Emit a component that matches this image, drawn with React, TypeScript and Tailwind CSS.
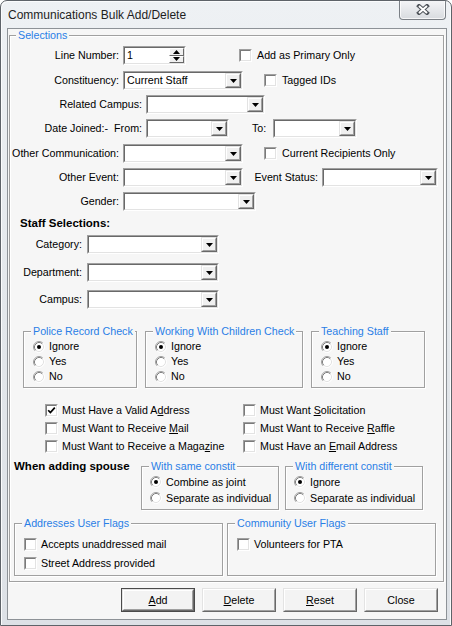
import React from "react";

function Label({ w, children }: { w: string; children: React.ReactNode }) {
  return <div className={`${w} shrink-0 text-right pr-[4px] whitespace-nowrap`}>{children}</div>;
}

function DropBtn() {
  return (
    <div className="w-[16px] h-full shrink-0 flex border border-t-[#e3e3e3] border-l-[#e3e3e3] border-r-[#696969] border-b-[#696969]">
      <div className="flex-1 flex items-center justify-center bg-[#f0f0f0] border border-t-white border-l-white border-r-[#a0a0a0] border-b-[#a0a0a0]">
        <svg width="7" height="4" viewBox="0 0 7 4" className="mt-[1px]">
          <path d="M0 0h7L3.5 4z" fill="#000" />
        </svg>
      </div>
    </div>
  );
}

function Combo({ w, value }: { w: string; value?: string }) {
  return (
    <div className={`${w} h-[19px] shrink-0 flex border border-t-[#a0a0a0] border-l-[#a0a0a0] border-r-white border-b-white`}>
      <div className="flex-1 min-w-0 flex border border-t-[#696969] border-l-[#696969] border-r-[#e3e3e3] border-b-[#e3e3e3] bg-white">
        <div className="flex-1 min-w-0 pl-[2px] leading-[15px] whitespace-nowrap overflow-hidden">{value}</div>
        <DropBtn />
      </div>
    </div>
  );
}

function SpinBtn({ up }: { up?: boolean }) {
  return (
    <div className="flex-1 flex items-center justify-center bg-[#f0f0f0] border border-t-white border-l-white border-r-[#696969] border-b-[#696969]">
      <svg width="7" height="4" viewBox="0 0 7 4">
        {up ? <path d="M0 4h7L3.5 0z" fill="#000" /> : <path d="M0 0h7L3.5 4z" fill="#000" />}
      </svg>
    </div>
  );
}

function Spinner() {
  return (
    <div className="w-[63px] h-[19px] shrink-0 flex border border-t-[#a0a0a0] border-l-[#a0a0a0] border-r-white border-b-white">
      <div className="flex-1 flex border border-t-[#696969] border-l-[#696969] border-r-[#e3e3e3] border-b-[#e3e3e3] bg-white">
        <div className="flex-1 pl-[2px] leading-[15px]">1</div>
        <div className="w-[15px] flex flex-col">
          <SpinBtn up />
          <SpinBtn />
        </div>
      </div>
    </div>
  );
}

function Check({ on }: { on?: boolean }) {
  return (
    <div className="w-[13px] h-[13px] shrink-0 border border-t-[#a0a0a0] border-l-[#a0a0a0] border-r-white border-b-white">
      <div className="w-full h-full bg-white border border-t-[#7a7a7a] border-l-[#7a7a7a] border-r-[#e3e3e3] border-b-[#e3e3e3] flex items-center justify-center">
        {on && (
          <svg width="9" height="9" viewBox="0 0 9 9">
            <path d="M1.2 4.2 L3.4 6.6 L7.8 1.6" stroke="#000" strokeWidth="1.7" fill="none" />
          </svg>
        )}
      </div>
    </div>
  );
}

function Radio({ on }: { on?: boolean }) {
  return (
    <svg width="12" height="12" viewBox="0 0 12 12" className="shrink-0">
      <circle cx="6" cy="6" r="5" fill="#fff" />
      <path d="M2.11 9.89A5.5 5.5 0 0 1 9.89 2.11" stroke="#a0a0a0" fill="none" />
      <path d="M9.89 2.11A5.5 5.5 0 0 1 2.11 9.89" stroke="#ffffff" fill="none" />
      <path d="M2.82 9.18A4.5 4.5 0 0 1 9.18 2.82" stroke="#808080" fill="none" />
      <path d="M9.18 2.82A4.5 4.5 0 0 1 2.82 9.18" stroke="#e3e3e3" fill="none" />
      {on && <circle cx="6" cy="6" r="2" fill="#000" />}
    </svg>
  );
}

function CheckRow({ on, children, gap = "gap-[4px]" }: { on?: boolean; children: React.ReactNode; gap?: string }) {
  return (
    <div className={`flex items-center ${gap} whitespace-nowrap`}>
      <Check on={on} />
      <span>{children}</span>
    </div>
  );
}

function RadioRow({ on, children, h }: { on?: boolean; children: React.ReactNode; h: string }) {
  return (
    <div className={`${h} flex items-center gap-[4px] whitespace-nowrap`}>
      <Radio on={on} />
      <span>{children}</span>
    </div>
  );
}

function Group({
  title,
  className,
  legend = "left-[7px]",
  children,
}: {
  title: string;
  className: string;
  legend?: string;
  children?: React.ReactNode;
}) {
  return (
    <div className={`relative shrink-0 border border-[#a0a0a0] shadow-[inset_1px_1px_0_#fff,1px_1px_0_#fff] ${className}`}>
      <span className={`absolute -top-[7px] ${legend} px-[2px] leading-[13px] bg-[#f6f6f6] text-[#2a7ee6] whitespace-nowrap`}>
        {title}
      </span>
      {children}
    </div>
  );
}

function Btn({ children, def }: { children: React.ReactNode; def?: boolean }) {
  const inner = (
    <div className="w-full h-full border border-t-[#e3e3e3] border-l-[#e3e3e3] border-r-[#696969] border-b-[#696969]">
      <div className="w-full h-full border border-t-white border-l-white border-r-[#a0a0a0] border-b-[#a0a0a0] bg-[#f3f3f3] flex items-center justify-center">
        {children}
      </div>
    </div>
  );
  return def ? (
    <div className="w-[74px] h-[24px] border border-[#4a4a4a]">{inner}</div>
  ) : (
    <div className="w-[74px] h-[24px]">{inner}</div>
  );
}

export default function App() {
  return (
    <div className="w-[452px] h-[626px] flex flex-col border border-[#5e6369] rounded-t-[7px] bg-linear-to-b from-[#eef1f4] via-[#e3e7eb] to-[#dde1e6] shadow-[inset_1px_1px_0_#fbfcfd,inset_-1px_0_0_#fbfcfd] font-['Liberation_Sans',Arial,sans-serif] text-[10.7px] leading-[13px] text-black overflow-hidden">
      {/* Title bar */}
      <div className="h-[27px] shrink-0 flex items-start">
        <span className="pl-[7px] pt-[6px] text-[12px] leading-[16px] text-[#1e1e1e]">Communications Bulk Add/Delete</span>
        <div className="ml-auto -mt-[1px] mr-[5px] w-[47px] h-[20px] rounded-b-[4px] border border-t-0 border-[#7b8086] bg-linear-to-b from-[#f5f6f8] to-[#d8dbdf] shadow-[inset_0_0_0_1px_rgba(255,255,255,0.75)] flex items-center justify-center">
          <svg width="14" height="11" viewBox="0 0 14 11">
            <path d="M3 2 L11 9 M11 2 L3 9" stroke="#50555b" strokeWidth="4" strokeLinecap="square" />
            <path d="M3 2 L11 9 M11 2 L3 9" stroke="#ffffff" strokeWidth="2" strokeLinecap="butt" />
          </svg>
        </div>
      </div>

      {/* Client area */}
      <div className="ml-[6px] w-[440px] h-[592px] shrink-0 border border-[#8d9297] bg-[#f6f6f6] flex flex-col">
        <Group title="Selections" legend="left-[6px]" className="ml-[1px] mt-[6px] w-[435px] h-[547px]">
          <div className="flex flex-col">
            {/* Line Number */}
            <div className="mt-[10px] h-[19px] flex items-center">
              <Label w="w-[113px]">Line Number:</Label>
              <Spinner />
              <div className="ml-[53px]">
                <CheckRow gap="gap-[5px]">Add as Primary Only</CheckRow>
              </div>
            </div>
            {/* Constituency */}
            <div className="mt-[6px] h-[19px] flex items-center">
              <Label w="w-[113px]">Constituency:</Label>
              <Combo w="w-[120px]" value="Current Staff" />
              <div className="ml-[21px]">
                <CheckRow gap="gap-[5px]">Tagged IDs</CheckRow>
              </div>
            </div>
            {/* Related Campus */}
            <div className="mt-[5px] h-[19px] flex items-center">
              <Label w="w-[136px]">Related Campus:</Label>
              <Combo w="w-[119px]" />
            </div>
            {/* Date Joined */}
            <div className="mt-[5px] h-[19px] flex items-center">
              <Label w="w-[136px]">
                Date Joined:-<span className="ml-[6px]">From:</span>
              </Label>
              <Combo w="w-[83px]" />
              <span className="ml-[23px] w-[21px] shrink-0">To:</span>
              <Combo w="w-[84px]" />
            </div>
            {/* Other Communication */}
            <div className="mt-[6px] h-[19px] flex items-center">
              <Label w="w-[113px]">Other Communication:</Label>
              <Combo w="w-[120px]" />
              <div className="ml-[21px]">
                <CheckRow gap="gap-[5px]">Current Recipients Only</CheckRow>
              </div>
            </div>
            {/* Other Event */}
            <div className="mt-[5px] h-[19px] flex items-center">
              <Label w="w-[113px]">Other Event:</Label>
              <Combo w="w-[120px]" />
              <div className="ml-[10px]">
                <Label w="w-[69px]">Event Status:</Label>
              </div>
              <Combo w="w-[116px]" />
            </div>
            {/* Gender */}
            <div className="mt-[5px] h-[19px] flex items-center">
              <Label w="w-[113px]">Gender:</Label>
              <Combo w="w-[133px]" />
            </div>

            {/* Staff Selections */}
            <div className="mt-[5px] ml-[10px] h-[14px] font-bold text-[11.5px] leading-[14px]">Staff Selections:</div>
            <div className="mt-[5px] h-[19px] flex items-center">
              <div className="w-[77px] shrink-0 text-right pr-[5px]">Category:</div>
              <Combo w="w-[132px]" />
            </div>
            <div className="mt-[9px] h-[19px] flex items-center">
              <div className="w-[77px] shrink-0 text-right pr-[5px]">Department:</div>
              <Combo w="w-[132px]" />
            </div>
            <div className="mt-[8px] h-[19px] flex items-center">
              <div className="w-[77px] shrink-0 text-right pr-[5px]">Campus:</div>
              <Combo w="w-[132px]" />
            </div>

            {/* Radio groups */}
            <div className="mt-[22px] ml-[13px] flex gap-[8px]">
              <Group title="Police Record Check" className="w-[114px] h-[57px]">
                <div className="pt-[7px] pl-[9px] flex flex-col">
                  <RadioRow h="h-[15px]" on>Ignore</RadioRow>
                  <RadioRow h="h-[15px]">Yes</RadioRow>
                  <RadioRow h="h-[15px]">No</RadioRow>
                </div>
              </Group>
              <Group title="Working With Children Check" className="w-[158px] h-[57px]">
                <div className="pt-[7px] pl-[9px] flex flex-col">
                  <RadioRow h="h-[15px]" on>Ignore</RadioRow>
                  <RadioRow h="h-[15px]">Yes</RadioRow>
                  <RadioRow h="h-[15px]">No</RadioRow>
                </div>
              </Group>
              <Group title="Teaching Staff" className="w-[114px] h-[57px]">
                <div className="pt-[7px] pl-[9px] flex flex-col">
                  <RadioRow h="h-[15px]" on>Ignore</RadioRow>
                  <RadioRow h="h-[15px]">Yes</RadioRow>
                  <RadioRow h="h-[15px]">No</RadioRow>
                </div>
              </Group>
            </div>

            {/* Checkbox block */}
            <div className="mt-[13px] ml-[35px] grid grid-cols-[198px_auto] auto-rows-[18px] items-center">
              <CheckRow on>
                Must Have a Valid A<span className="underline">d</span>dress
              </CheckRow>
              <CheckRow>
                Must Want <span className="underline">S</span>olicitation
              </CheckRow>
              <CheckRow>
                Must Want to Receive <span className="underline">M</span>ail
              </CheckRow>
              <CheckRow>
                Must Want to Receive <span className="underline">R</span>affle
              </CheckRow>
              <CheckRow>
                Must Want to Receive a Maga<span className="underline">z</span>ine
              </CheckRow>
              <CheckRow>
                Must Have an <span className="underline">E</span>mail Address
              </CheckRow>
            </div>

            {/* Spouse */}
            <div className="mt-[4px] flex items-start">
              <div className="ml-[4px] w-[127px] shrink-0 font-bold text-[11.5px] leading-[14px] whitespace-nowrap">When adding spouse</div>
              <Group title="With same constit" className="mt-[7px] w-[138px] h-[44px]">
                <div className="pt-[7px] pl-[8px] flex flex-col">
                  <RadioRow h="h-[16px]" on>Combine as joint</RadioRow>
                  <RadioRow h="h-[16px]">Separate as individual</RadioRow>
                </div>
              </Group>
              <Group title="With different constit" className="ml-[6px] mt-[7px] w-[138px] h-[44px]">
                <div className="pt-[7px] pl-[8px] flex flex-col">
                  <RadioRow h="h-[16px]" on>Ignore</RadioRow>
                  <RadioRow h="h-[16px]">Separate as individual</RadioRow>
                </div>
              </Group>
            </div>

            {/* User flags */}
            <div className="mt-[13px] ml-[4px] flex gap-[4px]">
              <Group title="Addresses User Flags" className="w-[209px] h-[53px]">
                <div className="pt-[11px] pl-[9px] flex flex-col">
                  <div className="h-[19px] flex items-center">
                    <CheckRow>Accepts unaddressed mail</CheckRow>
                  </div>
                  <div className="h-[19px] flex items-center">
                    <CheckRow>Street Address provided</CheckRow>
                  </div>
                </div>
              </Group>
              <Group title="Community User Flags" className="w-[209px] h-[53px]">
                <div className="pt-[11px] pl-[9px] flex flex-col">
                  <div className="h-[19px] flex items-center">
                    <CheckRow>Volunteers for PTA</CheckRow>
                  </div>
                </div>
              </Group>
            </div>
          </div>
        </Group>

        {/* Buttons */}
        <div className="mt-[6px] pr-[8px] flex justify-end gap-[7px]">
          <Btn def>
            <span className="underline">A</span>dd
          </Btn>
          <Btn>
            <span className="underline">D</span>elete
          </Btn>
          <Btn>
            <span className="underline">R</span>eset
          </Btn>
          <Btn>Close</Btn>
        </div>
      </div>
    </div>
  );
}
